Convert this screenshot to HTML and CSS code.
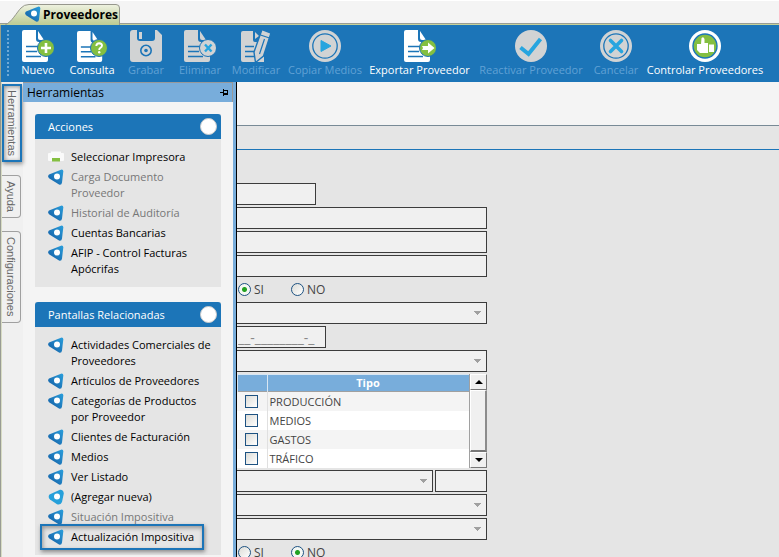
FILE: index.html
```
<!DOCTYPE html>
<html lang="es">
<head>
    <meta charset="UTF-8">
    <meta name="viewport" content="width=device-width, initial-scale=1.0">
    <title>Proveedores</title>
    <link rel="stylesheet" href="styles.css">
</head>
<body>
    <!-- shared shapes -->
    <svg class="defs" width="0" height="0">
        <defs>
            <linearGradient id="blueGrad" x1="0" y1="1" x2="1" y2="0">
                <stop offset="0.3" stop-color="#1a6fb3"/>
                <stop offset="1" stop-color="#2a9fdc"/>
            </linearGradient>
            <linearGradient id="tabGrad" x1="0" y1="0" x2="0" y2="1">
                <stop offset="0" stop-color="#eef2e0"/>
                <stop offset="1" stop-color="#bccb92"/>
            </linearGradient>
        </defs>
        <symbol id="logo" viewBox="0 0 16 16">
            <path d="M1 5.6Q-0.6 7.3 1 9.2L11 15.6Q13.6 16.4 14 13.5L15.3 2.6Q15.4 0.2 13 0.7Z" fill="url(#blueGrad)"/>
            <circle cx="9" cy="7.6" r="3" fill="#fff"/>
        </symbol>
        <symbol id="logo-light" viewBox="0 0 16 16">
            <path d="M1.5 5.5Q-0.4 8 2 10.5L9 15.3Q12.5 16.4 14 13L15.8 4.5Q15.5 0.6 12 0.8Z" fill="#27a0da"/>
            <circle cx="9" cy="7.6" r="3" fill="#fff"/>
        </symbol>
        <symbol id="doc" viewBox="0 0 32 32">
            <path d="M2 0H14V9Q14 12 17 12H26V30Q26 32 24 32H2Q0 32 0 30V2Q0 0 2 0Z" fill="currentColor"/>
            <path d="M16 1V8Q16 10 18 10H22Z" fill="currentColor"/>
            <path d="M4 16.5H16M4 21.5H15M4 26.5H19" stroke="#1c75b8" stroke-width="1.6"/>
        </symbol>
    </svg>

    <header class="tabstrip">
        <a class="doc-tab" href="#">
            <svg class="doc-tab-shape" width="116" height="21" viewBox="0 0 116 21">
                <path d="M0.5 20.5C6 19 12 8 16 4Q19 0.5 24 0.5H111Q114.5 0.5 114.5 4V21" fill="url(#tabGrad)" stroke="#96978c"/>
            </svg>
            <svg class="icon16" width="16" height="16"><use href="#logo"/></svg>
            <span>Proveedores</span>
        </a>
    </header>

    <nav class="toolbar">
        <span class="grip"></span>
        <button class="tool">
            <svg width="32" height="32" viewBox="0 0 32 32">
                <use href="#doc" width="32" height="32"/>
                <circle cx="24" cy="18" r="8.5" fill="#84bf41" stroke="#1c75b8"/>
                <path d="M24 13V23M19 18H29" stroke="#fff" stroke-width="2.6"/>
            </svg>
            <span>Nuevo</span>
        </button>
        <button class="tool">
            <svg width="32" height="32" viewBox="0 0 32 32">
                <use href="#doc" x="1" y="1" width="31" height="31"/>
                <circle cx="23" cy="18" r="8.5" fill="#84bf41" stroke="#1c75b8"/>
                <path d="M20.3 16Q20.5 13.2 23.2 13.2Q26 13.4 26 15.6Q26 17 24.4 17.8Q23.2 18.5 23.2 20" fill="none" stroke="#fff" stroke-width="1.9"/>
                <circle cx="23.2" cy="22.3" r="1.2" fill="#fff"/>
            </svg>
            <span>Consulta</span>
        </button>
        <button class="tool" disabled>
            <svg width="32" height="32" viewBox="0 0 32 32">
                <path d="M3 0H7V8Q7 11 10 11H22Q25 11 25 8V0H27L32 5V29Q32 32 29 32H3Q0 32 0 29V3Q0 0 3 0Z" fill="currentColor"/>
                <path d="M9 2H12V9H9Z" fill="currentColor"/>
                <circle cx="16" cy="20.5" r="5.2" fill="none" stroke="#1c75b8" stroke-width="1.6"/>
                <circle cx="16" cy="20.5" r="1.8" fill="#1c75b8"/>
            </svg>
            <span>Grabar</span>
        </button>
        <button class="tool" disabled>
            <svg width="32" height="32" viewBox="0 0 32 32">
                <use href="#doc" width="32" height="32"/>
                <circle cx="24" cy="18" r="8.5" fill="currentColor" stroke="#1c75b8"/>
                <path d="M21 14.5L27.5 21.5M27.5 14.5L21 21.5" stroke="#27a5df" stroke-width="2.4"/>
            </svg>
            <span>Eliminar</span>
        </button>
        <button class="tool" disabled>
            <svg width="32" height="32" viewBox="0 0 32 32">
                <path d="M3 1H13V10Q13 12 15 12H24V32H3Q1 32 1 30V3Q1 1 3 1Z" fill="currentColor"/>
                <path d="M15 2V9L19 6Z" fill="currentColor"/>
                <path d="M5 16.5H14M5 21.5H14M5 26.5H14" stroke="#1c75b8" stroke-width="1.6"/>
                <path d="M22 -0.5L31 3L23.5 26L15.5 32.5L14 22Z" fill="currentColor" stroke="#1c75b8" stroke-width="1.4"/>
                <path d="M20.5 5L29.5 8M24.5 9L19.5 24" stroke="#1c75b8" stroke-width="1.2"/>
            </svg>
            <span>Modificar</span>
        </button>
        <button class="tool" disabled>
            <svg width="32" height="32" viewBox="0 0 32 32">
                <circle cx="16" cy="16" r="16" fill="currentColor"/>
                <circle cx="16" cy="16" r="12.2" fill="none" stroke="#1c75b8" stroke-width="1.3"/>
                <path d="M12 10.5V21.5L22 16Z" fill="#27a5df" stroke="#27a5df" stroke-linejoin="round"/>
            </svg>
            <span>Copiar Medios</span>
        </button>
        <button class="tool">
            <svg width="32" height="32" viewBox="0 0 32 32">
                <use href="#doc" width="32" height="32"/>
                <circle cx="24" cy="18" r="8.5" fill="#84bf41" stroke="#1c75b8"/>
                <path d="M18 16H24V12.5L30.5 18L24 23.5V20H18L19 18Z" fill="#fff"/>
            </svg>
            <span>Exportar Proveedor</span>
        </button>
        <button class="tool" disabled>
            <svg width="32" height="32" viewBox="0 0 32 32">
                <circle cx="16" cy="16" r="16" fill="currentColor"/>
                <path d="M5.5 17.5L13.5 24L25.5 9" fill="none" stroke="#27a5df" stroke-width="4"/>
            </svg>
            <span>Reactivar Proveedor</span>
        </button>
        <button class="tool" disabled>
            <svg width="32" height="32" viewBox="0 0 32 32">
                <circle cx="16" cy="16" r="16" fill="currentColor"/>
                <circle cx="16" cy="16" r="12.2" fill="none" stroke="#1c75b8" stroke-width="1.3"/>
                <path d="M10.5 10.5L21.5 21.5M21.5 10.5L10.5 21.5" stroke="#27a5df" stroke-width="3.6" stroke-linecap="round"/>
            </svg>
            <span>Cancelar</span>
        </button>
        <button class="tool">
            <svg width="32" height="32" viewBox="0 0 32 32">
                <circle cx="16" cy="16" r="16" fill="currentColor"/>
                <circle cx="16" cy="16" r="12" fill="#84bf41" stroke="#1c75b8" stroke-width="1.4"/>
                <path d="M8 14H12L12.5 8Q14.5 6 15.5 9V13H19V23H11L8 20Z" fill="#fff"/>
                <path d="M20 14.5H25V22H20Z" fill="#fff"/>
            </svg>
            <span>Controlar Proveedores</span>
        </button>
        <button class="tool" disabled aria-label="Más">
            <svg width="32" height="32" viewBox="0 0 32 32">
                <circle cx="18" cy="12" r="16" fill="currentColor"/>
            </svg>
        </button>
    </nav>

    <div class="workspace">
        <div class="side-tabs">
            <button class="side-tab active">Herramientas</button>
            <button class="side-tab">Ayuda</button>
            <button class="side-tab">Configuraciones</button>
        </div>

        <aside class="panel">
            <div class="panel-title">
                <span>Herramientas</span>
                <svg width="8" height="7" viewBox="0 0 8 7" shape-rendering="crispEdges">
                    <path d="M0 3H3V4H0ZM3 0H4V7H3ZM4 1H8V2H4ZM7 1H8V6H7ZM4 4H8V6H4Z"/>
                </svg>
            </div>

            <section class="group">
                <h2>Acciones <button class="toggle" aria-label="Contraer"></button></h2>
                <ul>
                    <li>
                        <svg width="16" height="16" viewBox="0 0 16 16">
                            <path d="M3 2.5H13V4H15Q16 4 16 5V11Q16 12 15 12H1Q0 12 0 11V5Q0 4 1 4H3Z" fill="#fafafa"/>
                            <path d="M4 9H12V12.5H4Z" fill="#84bf41"/>
                        </svg>
                        <a href="#">Seleccionar Impresora</a>
                    </li>
                    <li class="off"><svg width="16" height="16"><use href="#logo"/></svg><a href="#">Carga Documento<br>Proveedor</a></li>
                    <li class="off"><svg width="16" height="16"><use href="#logo"/></svg><a href="#">Historial de Auditoría</a></li>
                    <li><svg width="16" height="16"><use href="#logo"/></svg><a href="#">Cuentas Bancarias</a></li>
                    <li><svg width="16" height="16"><use href="#logo"/></svg><a href="#">AFIP - Control Facturas<br>Apócrifas</a></li>
                </ul>
            </section>

            <section class="group">
                <h2>Pantallas Relacionadas <button class="toggle" aria-label="Contraer"></button></h2>
                <ul>
                    <li><svg width="16" height="16"><use href="#logo"/></svg><a href="#">Actividades Comerciales de<br>Proveedores</a></li>
                    <li><svg width="16" height="16"><use href="#logo"/></svg><a href="#">Artículos de Proveedores</a></li>
                    <li><svg width="16" height="16"><use href="#logo"/></svg><a href="#">Categorías de Productos<br>por Proveedor</a></li>
                    <li><svg width="16" height="16"><use href="#logo"/></svg><a href="#">Clientes de Facturación</a></li>
                    <li><svg width="16" height="16"><use href="#logo"/></svg><a href="#">Medios</a></li>
                    <li><svg width="16" height="16"><use href="#logo"/></svg><a href="#">Ver Listado</a></li>
                    <li><svg width="16" height="16"><use href="#logo-light"/></svg><a href="#">(Agregar nueva)</a></li>
                    <li class="off"><svg width="16" height="16"><use href="#logo"/></svg><a href="#">Situación Impositiva</a></li>
                    <li class="marked"><svg width="16" height="16"><use href="#logo"/></svg><a href="#">Actualización Impositiva</a></li>
                </ul>
            </section>
        </aside>

        <main class="content">
            <div class="content-head"></div>
            <div class="band"></div>
            <form class="fields">
                <input class="field short" type="text" aria-label="Código">
                <input class="field" type="text" aria-label="Nombre">
                <input class="field" type="text" aria-label="Razón social">
                <input class="field" type="text" aria-label="Nombre fantasía">
                <div class="radios">
                    <label><input type="radio" name="activo" checked>SI</label>
                    <label><input type="radio" name="activo">NO</label>
                </div>
                <select class="field" aria-label="Condición"><option></option></select>
                <input class="field cuit" type="text" placeholder="__-________-_" aria-label="CUIT">
                <select class="field" aria-label="Rubro"><option></option></select>
                <div class="list">
                    <table>
                        <thead>
                            <tr><th class="check-col"></th><th>Tipo</th></tr>
                        </thead>
                        <tbody>
                            <tr><td class="check-col"><input type="checkbox" id="t1"></td><td><label for="t1">PRODUCCIÓN</label></td></tr>
                            <tr><td class="check-col"><input type="checkbox" id="t2"></td><td><label for="t2">MEDIOS</label></td></tr>
                            <tr><td class="check-col"><input type="checkbox" id="t3"></td><td><label for="t3">GASTOS</label></td></tr>
                            <tr><td class="check-col"><input type="checkbox" id="t4"></td><td><label for="t4">TRÁFICO</label></td></tr>
                        </tbody>
                    </table>
                    <div class="scroll">
                        <button type="button" aria-label="Subir"><svg width="8" height="4" viewBox="0 0 8 4"><path d="M0 4L4 0L8 4Z"/></svg></button>
                        <div class="thumb"></div>
                        <button type="button" aria-label="Bajar"><svg width="8" height="4" viewBox="0 0 8 4"><path d="M0 0L4 4L8 0Z"/></svg></button>
                    </div>
                </div>
                <div class="pair">
                    <select class="field" aria-label="Provincia"><option></option></select>
                    <input class="field" type="text" aria-label="Código postal">
                </div>
                <select class="field" aria-label="País"><option></option></select>
                <select class="field" aria-label="Moneda"><option></option></select>
                <div class="radios">
                    <label><input type="radio" name="exento">SI</label>
                    <label><input type="radio" name="exento" checked>NO</label>
                </div>
            </form>
        </main>
    </div>
</body>
</html>
```

FILE: styles.css
```
* {
    box-sizing: border-box;
}

body {
    margin: 0;
    height: 100vh;
    overflow: hidden;
    display: flex;
    flex-direction: column;
    background: #f4f4f4;
    font-family: "Open Sans", "Noto Sans", sans-serif;
    font-size: 11px;
    color: #000;
}

button {
    font: inherit;
    padding: 0;
    border: none;
    background: none;
}

a {
    color: inherit;
    text-decoration: none;
}

svg {
    display: block;
    flex: none;
}

.defs {
    position: absolute;
}

/* document tab */
.tabstrip {
    flex: none;
    height: 25px;
    padding: 3px 0 0 5px;
    border-top: 1px solid #fff;
    border-bottom: 1px solid #c5d19a;
    box-shadow: inset 0 -1px #999c94;
}

.doc-tab {
    position: relative;
    display: flex;
    align-items: center;
    gap: 2px;
    width: 116px;
    height: 20px;
    padding-left: 20px;
    font-size: 12px;
    font-weight: bold;
}

.doc-tab-shape {
    position: absolute;
    left: 0;
    top: 0;
}

.doc-tab .icon16,
.doc-tab span {
    position: relative;
}

/* toolbar */
.toolbar {
    flex: none;
    display: grid;
    grid-template-columns: 9px 54px 54px 54px 54px 58px 80px 109px 114px 56px 122px 56px;
    height: 57px;
    padding: 5px 0 0 1px;
    overflow: hidden;
    background: #1c75b8;
    border-left: 1px solid #99a08a;
}

.grip {
    width: 2px;
    height: 47px;
    margin-left: 5px;
    background: repeating-linear-gradient(#6fa9d6 0 2px, transparent 2px 4px);
}

.tool {
    display: flex;
    flex-direction: column;
    align-items: center;
    line-height: 16px;
    white-space: nowrap;
    color: #fff;
}

.tool:disabled {
    color: #d1d3d4;
}

.tool:disabled span {
    color: #60a1d5;
}

/* workspace */
.workspace {
    flex: 1;
    display: flex;
    min-height: 0;
    border-left: 1px solid #999c94;
}

.side-tabs {
    flex: none;
    width: 22px;
    display: flex;
    flex-direction: column;
    align-items: flex-start;
    gap: 13px;
    padding-top: 2px;
    border-left: 1px solid #d8dcc4;
    background: #f0f0f0;
}

.side-tab {
    width: 19px;
    padding: 5px 0;
    writing-mode: vertical-rl;
    border: 1px solid #a0a0a0;
    border-left: none;
    border-radius: 0 4px 4px 0;
    font-family: "Liberation Sans", Arial, sans-serif;
    font-size: 11px;
    line-height: 18px;
    color: #666;
}

.side-tab.active {
    width: 20px;
    padding: 4px 0;
    line-height: 16px;
    border: 2px solid #1c75b8;
    border-radius: 0;
    background: #f4f4f4;
    box-shadow: 1px 2px 4px rgba(0, 0, 0, 0.4), inset 1px 1px 4px rgba(0, 0, 0, 0.4);
}

.panel {
    flex: none;
    width: 214px;
    overflow: hidden;
    border-right: 1px solid #000;
    box-shadow: inset -3px 0 #78addb;
}

.panel-title {
    display: flex;
    align-items: center;
    justify-content: space-between;
    height: 20px;
    margin-right: 3px;
    padding: 0 4px;
    background: #78addb;
    border-top: 1px solid #999;
    border-right: 1px solid #999;
    font-size: 12px;
}

.group {
    width: 186px;
    margin: 12px 0 15px 12px;
    background: #e5e5e5;
}

.group h2 {
    display: flex;
    align-items: center;
    justify-content: space-between;
    height: 25px;
    margin: 0;
    padding: 0 4px 0 13px;
    background: #1c75b8;
    border-radius: 3px 3px 0 0;
    font-size: 11px;
    font-weight: normal;
    color: #fff;
}

.toggle {
    width: 17px;
    height: 17px;
    border: 1px solid #ccc;
    border-radius: 50%;
    background: #fff;
}

.group ul {
    list-style: none;
    margin: 0;
    padding: 10px 13px;
    display: flex;
    flex-direction: column;
    gap: 4px;
}

.group li {
    display: flex;
    align-items: flex-start;
    gap: 7px;
    line-height: 16px;
    white-space: nowrap;
}

.group li.off {
    color: #777;
}

.group li.marked {
    width: 164px;
    margin: -5px -8px;
    padding: 3px 6px;
    border: 2px solid #1c75b8;
    box-shadow: 1px 2px 4px rgba(0, 0, 0, 0.4), inset 1px 2px 4px rgba(0, 0, 0, 0.35);
}

/* form */
.content {
    flex: 1;
    min-width: 0;
    background: #e5e5e5;
}

.content-head {
    height: 44px;
    background: #f4f4f4;
    border-bottom: 1px solid #788a96;
}

.band {
    height: 24px;
    border-bottom: 1px solid #1c75b8;
}

.fields {
    display: flex;
    flex-direction: column;
    gap: 2px;
    width: 250px;
    padding-top: 33px;
    color: #444;
}

.field {
    display: block;
    width: 100%;
    height: 22px;
    margin: 0;
    padding: 0 1px;
    border: 1px solid #3c3c3c;
    border-left: none;
    border-radius: 0;
    background: #f0f0f0;
    font: inherit;
}

/* two small triangles make the arrow */
select.field {
    appearance: none;
    background:
        linear-gradient(to bottom left, #a0a0a0 50%, transparent 50%) no-repeat right 8px center / 4px 4px,
        linear-gradient(to bottom right, #a0a0a0 50%, transparent 50%) no-repeat right 4px center / 4px 4px,
        #f0f0f0;
}

.field.short {
    width: 79px;
}

.field.cuit {
    width: 89px;
    font-size: 14px;
}

.cuit::placeholder {
    color: #888;
    opacity: 1;
}

.radios {
    display: flex;
    height: 21px;
    font-size: 12px;
    line-height: 16px;
}

.radios label {
    display: flex;
    align-items: center;
    gap: 3px;
    width: 53px;
    padding-left: 1px;
}

input[type="radio"],
input[type="checkbox"] {
    appearance: none;
    flex: none;
    width: 13px;
    height: 13px;
    margin: 0;
    border: 1px solid #1d5282;
    background: linear-gradient(135deg, #dcdcd7, #fff);
}

input[type="radio"] {
    border-radius: 50%;
}

input[type="radio"]:checked {
    background: radial-gradient(circle, #21a121 0 2px, #f4f8f4 3px);
}

/* list of types */
.list {
    display: flex;
    height: 94px;
}

table {
    flex: 1;
    border-collapse: collapse;
    table-layout: fixed;
    background: #fff;
}

tr {
    height: 19px;
}

thead tr {
    height: 18px;
}

th {
    padding: 0;
    background: #78addb;
    box-shadow: inset 1px 1px #d8e6f2, inset 0 -1px #a0a0a0;
    line-height: 16px;
    color: #fff;
}

td {
    padding: 0 2px;
    line-height: 17px;
}

tbody tr:nth-child(odd) {
    background: #f4f4f4;
}

.check-col {
    width: 30px;
}

td.check-col {
    padding-left: 8px;
    border-right: 1px solid #e0e0e0;
}

td input {
    display: block;
}

.scroll {
    display: flex;
    flex-direction: column;
    width: 18px;
    border-left: 1px solid #a0a0a0;
    background: #f0f0f0;
}

.scroll button {
    display: flex;
    align-items: center;
    justify-content: center;
    height: 16px;
    border: 1px solid #fff;
    border-right-color: #777;
    border-bottom-color: #777;
    background: #f0f0f0;
}

.thumb {
    flex: 1;
    border: 1px solid #fff;
    border-right: 2px solid #8c8c8c;
    border-bottom: 2px solid #777;
}

.pair {
    display: grid;
    grid-template-columns: 1fr 52px;
    gap: 2px;
}

.pair input {
    border-left: 1px solid #3c3c3c;
}
```
